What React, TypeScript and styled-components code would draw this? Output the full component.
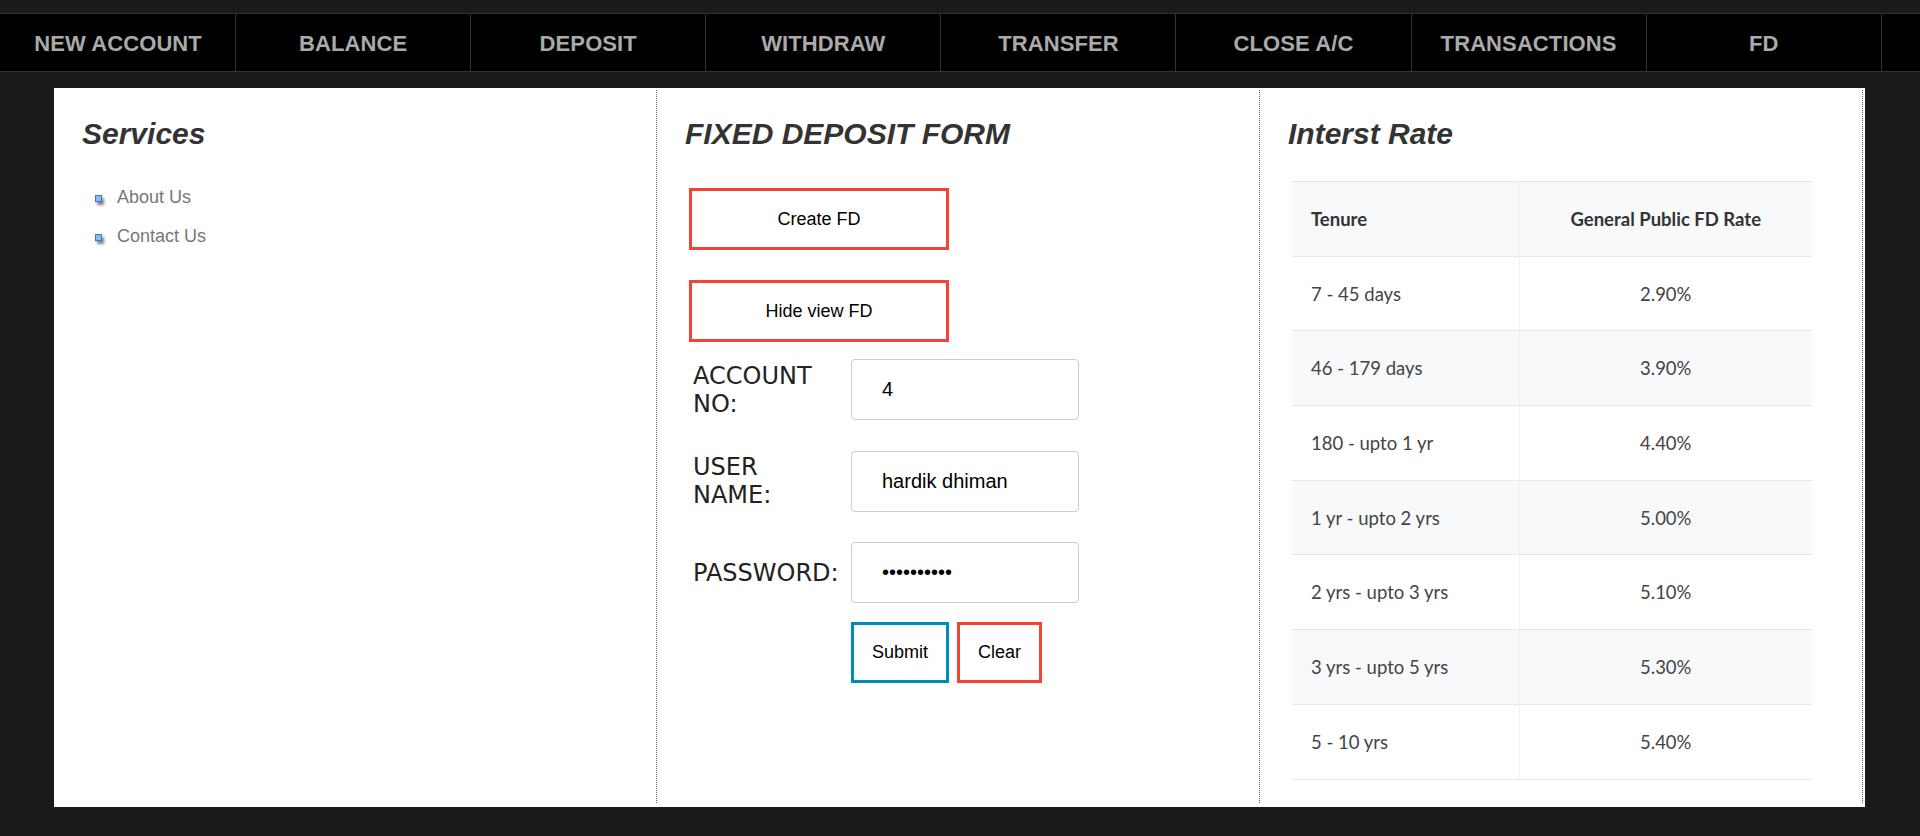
import React from "react";
import styled, { createGlobalStyle } from "styled-components";

const GlobalStyle = createGlobalStyle`
  body {
    margin: 0;
    background: #1a1a1a;
    font-family: "Liberation Sans", Arial, sans-serif;
  }
`;

const menu = [
  "NEW ACCOUNT",
  "BALANCE",
  "DEPOSIT",
  "WITHDRAW",
  "TRANSFER",
  "CLOSE A/C",
  "TRANSACTIONS",
  "FD",
];

const rates = [
  ["7 - 45 days", "2.90%"],
  ["46 - 179 days", "3.90%"],
  ["180 - upto 1 yr", "4.40%"],
  ["1 yr - upto 2 yrs", "5.00%"],
  ["2 yrs - upto 3 yrs", "5.10%"],
  ["3 yrs - upto 5 yrs", "5.30%"],
  ["5 - 10 yrs", "5.40%"],
];

export default function App() {
  return (
    <>
      <GlobalStyle />
      <NavBar>
        {menu.map((m) => (
          <NavItem key={m} href="#">
            {m}
          </NavItem>
        ))}
      </NavBar>

      <Main>
        <Column>
          <Heading>Services</Heading>
          <ServiceList>
            <ServiceItem>
              <Bullet />
              About Us
            </ServiceItem>
            <ServiceItem>
              <Bullet />
              Contact Us
            </ServiceItem>
          </ServiceList>
        </Column>

        <Column>
          <Heading>FIXED DEPOSIT FORM</Heading>
          <ToggleButton $first>Create FD</ToggleButton>
          <ToggleButton>Hide view FD</ToggleButton>

          <FormGrid>
            <Label>ACCOUNT NO:</Label>
            <Field type="text" defaultValue="4" />
            <Label>USER NAME:</Label>
            <Field type="text" defaultValue="hardik dhiman" />
            <Label>PASSWORD:</Label>
            <Field type="password" defaultValue="hardikdhim" />
          </FormGrid>

          <ActionRow>
            <ActionButton $color="#008cba">Submit</ActionButton>
            <ActionButton $color="#f44336">Clear</ActionButton>
          </ActionRow>
        </Column>

        <Column>
          <Heading>Interst Rate</Heading>
          <RateTable>
            <thead>
              <tr>
                <HeadCell>Tenure</HeadCell>
                <HeadCell $center>General Public FD Rate</HeadCell>
              </tr>
            </thead>
            <tbody>
              {rates.map(([tenure, rate], i) => (
                <RateRow key={tenure} $striped={i % 2 === 1}>
                  <Cell>{tenure}</Cell>
                  <Cell $center>{rate}</Cell>
                </RateRow>
              ))}
            </tbody>
          </RateTable>
        </Column>
      </Main>
    </>
  );
}

const NavBar = styled.nav`
  display: flex;
  margin-top: 13px;
  padding-left: 1px;
  height: 57px;
  background: #000;
  border-top: 1px solid #333;
  border-bottom: 1px solid #333;
`;

const NavItem = styled.a`
  box-sizing: border-box;
  flex: 0 0 235.1px;
  border-right: 1px solid #333;
  text-align: center;
  line-height: 59px;
  font-size: 22px;
  font-weight: 700;
  letter-spacing: 0.1px;
  color: #aaa;
  text-decoration: none;
`;

const Main = styled.div`
  display: grid;
  grid-template-columns: repeat(3, 603px);
  box-sizing: border-box;
  width: 1811px;
  height: 719px;
  margin: 16px 0 0 54px;
  padding: 2px 2px 4px 0;
  background: #fff;
`;

const Column = styled.section`
  box-sizing: border-box;
  border-right: 1px dotted #666;
  padding: 27px 28px 0;
`;

const Heading = styled.h2`
  margin: 0;
  font-size: 30px;
  line-height: 34px;
  font-style: italic;
  font-weight: 700;
  color: #333;
`;

const ServiceList = styled.ul`
  list-style: none;
  margin: 27px 0 0;
  padding: 0 0 0 13px;
`;

const ServiceItem = styled.li`
  display: flex;
  align-items: center;
  line-height: 39px;
  font-size: 18px;
  color: #777;
`;

const Bullet = styled.span`
  box-sizing: border-box;
  width: 7px;
  height: 7px;
  margin: 2px 15px 0 0;
  border: 1px solid #3a78bf;
  background: #8dbbe8;
  box-shadow: 2px 3px 3px rgba(0, 0, 0, 0.5);
`;

const ToggleButton = styled.button<{ $first?: boolean }>`
  display: block;
  box-sizing: border-box;
  width: 260px;
  height: 62px;
  margin: ${(p) => (p.$first ? "37px" : "30px")} 0 0 4px;
  border: 3px solid #f44336;
  background: #fff;
  font-family: "Liberation Sans", Arial, sans-serif;
  font-size: 18px;
  color: #000;
`;

const FormGrid = styled.div`
  display: grid;
  grid-template-columns: 146px 228px;
  column-gap: 12px;
  row-gap: 30.5px;
  align-items: center;
  margin: 17px 0 0 8px;
`;

const Label = styled.label`
  font-family: "DejaVu Sans", Verdana, sans-serif;
  font-size: 24px;
  line-height: 28px;
  color: #222;
`;

const Field = styled.input`
  box-sizing: border-box;
  width: 228px;
  height: 61px;
  padding: 0 0 0 30px;
  border: 1px solid #ccc;
  border-radius: 4px;
  font-family: "Liberation Sans", Arial, sans-serif;
  font-size: 20px;
  color: #000;
  outline: none;
`;

const ActionRow = styled.div`
  display: flex;
  gap: 8px;
  margin: 19px 0 0 166px;
`;

const ActionButton = styled.button<{ $color: string }>`
  box-sizing: border-box;
  height: 61px;
  padding: 0 18px;
  border: 3px solid ${(p) => p.$color};
  background: #fff;
  font-family: "Liberation Sans", Arial, sans-serif;
  font-size: 18px;
  color: #000;
`;

const RateTable = styled.table`
  width: 520px;
  margin: 30px 0 0 4px;
  border-collapse: collapse;
  font-family: Lato, "Open Sans", sans-serif;
  font-size: 18.5px;
  border-bottom: 1px solid #e6e9eb;

  tr {
    height: 74.7px;
    border-top: 1px solid #e6e9eb;
  }
`;

const HeadCell = styled.th<{ $center?: boolean }>`
  box-sizing: border-box;
  padding: 0 19px;
  background: #f7f9fa;
  font-weight: 700;
  color: #333;
  text-align: ${(p) => (p.$center ? "center" : "left")};
  width: ${(p) => (p.$center ? "auto" : "227px")};
  border-right: ${(p) => (p.$center ? "none" : "1px solid #eef0f2")};
`;

const RateRow = styled.tr<{ $striped: boolean }>`
  background: ${(p) => (p.$striped ? "#f7f9fa" : "#fff")};
`;

const Cell = styled.td<{ $center?: boolean }>`
  padding: 0 19px;
  color: #444;
  text-align: ${(p) => (p.$center ? "center" : "left")};
  border-right: ${(p) => (p.$center ? "none" : "1px solid #eef0f2")};
`;
